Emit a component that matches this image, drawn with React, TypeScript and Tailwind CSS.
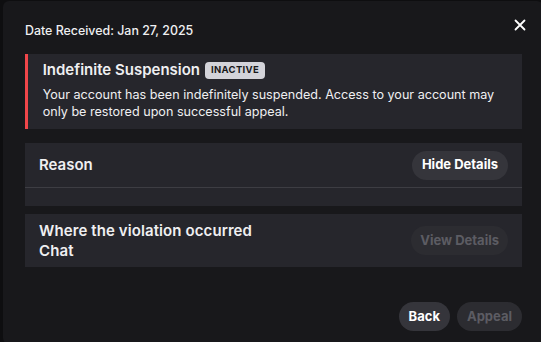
import React from "react";

export default function App() {
  return (
    <div className="w-[541px] h-[342px] bg-[#0e0e10] overflow-hidden" style={{ fontFamily: "Inter, 'Noto Sans', sans-serif" }}>
      <div className="relative ml-[3px] mt-[1px] w-[540px] h-[343px] rounded-md bg-[#18181b] flex flex-col pl-[22px] pr-[21px] pt-[21px] pb-[13px] text-[#efeff1]">
        <button className="absolute right-[15px] top-[16px] w-[16px] h-[16px] flex items-center justify-center text-white">
          <svg width="12" height="12" viewBox="0 0 12 12" fill="none">
            <path d="M1.5 1.5L10.5 10.5M10.5 1.5L1.5 10.5" stroke="currentColor" strokeWidth="1.8" strokeLinecap="round" />
          </svg>
        </button>
        <div className="text-[12.4px] leading-[18px] font-medium">Date Received: Jan 27, 2025</div>

        <div className="mt-[14px] flex bg-[#26262c]">
          <div className="w-[4px] bg-[#f0464a]" />
          <div className="pl-[15px] pr-[12px] pt-[6px] pb-[9px]">
            <div className="flex items-center gap-[5px]">
              <span className="text-[15px] leading-[20px] font-semibold">Indefinite Suspension</span>
              <span className="h-[17px] px-[6px] rounded-[4px] bg-[#d3d3d9] text-[#18181b] text-[9.5px] font-bold tracking-[0.3px] flex items-center">INACTIVE</span>
            </div>
            <div className="mt-[6px] text-[12.6px] leading-[17px]">
              Your account has been indefinitely suspended. Access to your account may only be restored upon successful appeal.
            </div>
          </div>
        </div>

        <div className="mt-[14px] bg-[#26262c]">
          <div className="flex items-center justify-between px-[14px] h-[44px]">
            <span className="text-[15px] font-semibold">Reason</span>
            <button className="h-[29px] px-[10px] rounded-full bg-[#35353b] text-[13px] font-bold text-white">Hide Details</button>
          </div>
          <div className="h-px bg-[#3d3d43]" />
          <div className="h-[18px]" />
        </div>

        <div className="mt-[8px] bg-[#26262c] flex items-center justify-between px-[14px] h-[53px]">
          <div className="text-[15px] leading-[20px] font-semibold tracking-[0.1px]">
            <div>Where the violation occurred</div>
            <div>Chat</div>
          </div>
          <button disabled className="h-[29px] px-[9px] rounded-full bg-[#2c2c31] text-[13px] font-bold text-[#5c5c63]">View Details</button>
        </div>

        <div className="mt-auto flex justify-end gap-[7px]">
          <button className="h-[29px] px-[10px] rounded-full bg-[#35353b] text-[13px] font-bold text-white">Back</button>
          <button disabled className="h-[29px] px-[10px] rounded-full bg-[#2c2c31] text-[13px] font-bold text-[#5c5c63]">Appeal</button>
        </div>
      </div>
    </div>
  );
}
